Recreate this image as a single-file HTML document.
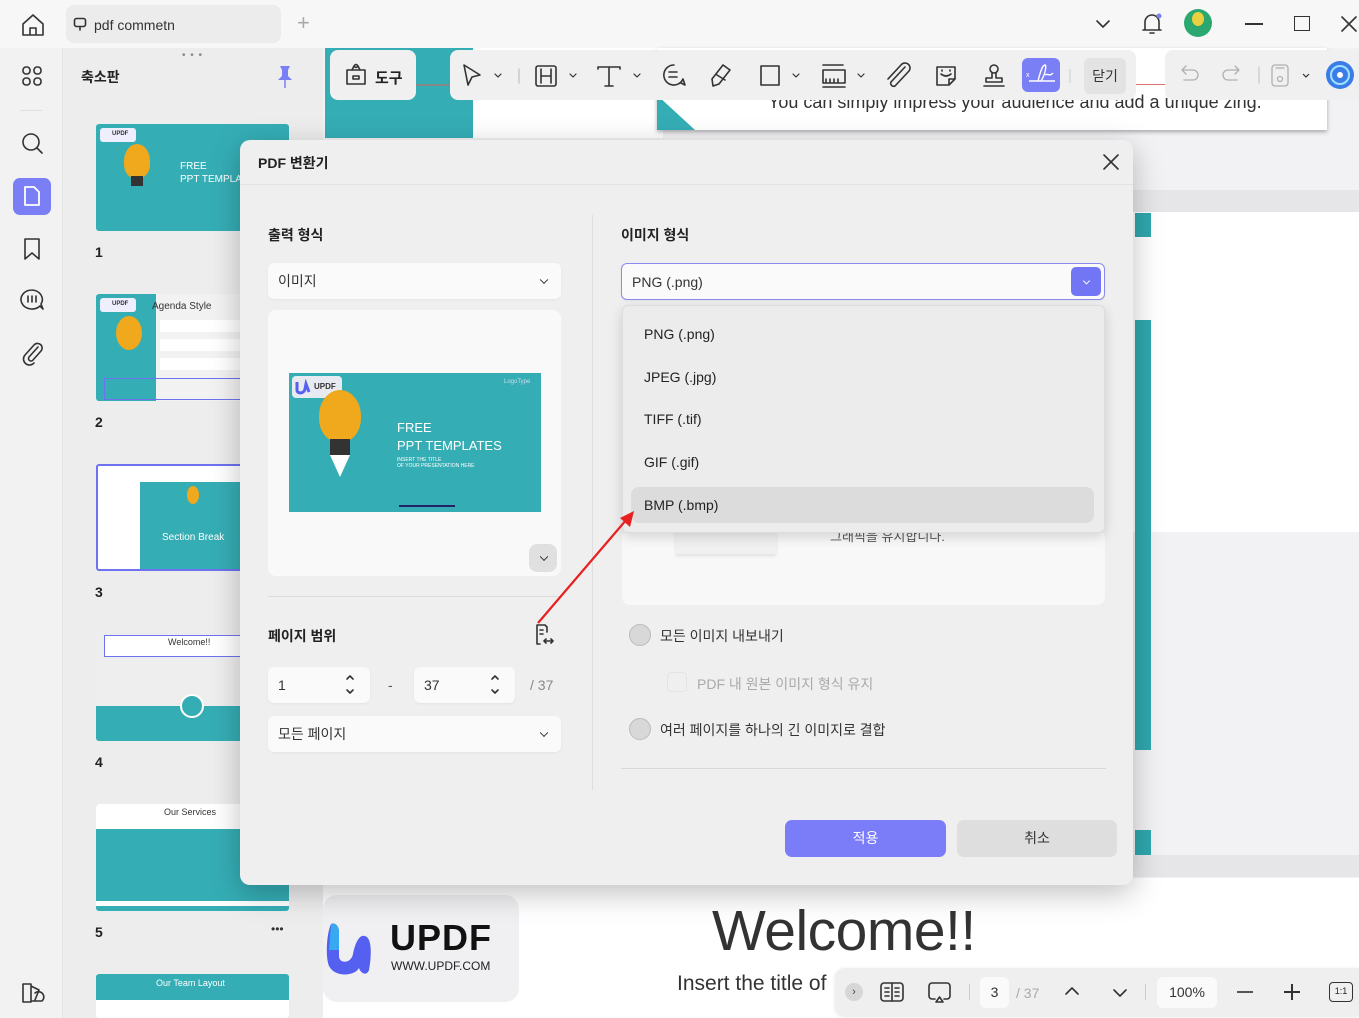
<!DOCTYPE html>
<html style="overflow:hidden;width:1359px;height:1018px"><head><meta charset="utf-8">
<style>
*{box-sizing:border-box;margin:0;padding:0}
body{width:1359px;height:1018px;overflow:hidden;position:relative;background:#f5f5f6;font-family:"Liberation Sans","Noto Sans CJK KR",sans-serif;color:#222}
.a{position:absolute}
.ic{stroke:#333;fill:none;stroke-width:1.6;stroke-linecap:round;stroke-linejoin:round}
.th{position:absolute;left:96px;width:193px;height:107px;background:#35adb5;border-radius:3px;overflow:hidden}
.num{position:absolute;left:95px;font-weight:bold;font-size:14px}
.logo{position:absolute;left:4px;top:4px;width:36px;height:14px;background:#eef;border-radius:3px;font-size:6px;font-weight:bold;color:#333;padding:3px 0 0 12px}
.sel{position:absolute;background:#fafafa;border-radius:6px;font-size:14px;color:#333;padding-left:10px;display:flex;align-items:center;box-shadow:0 1px 2px rgba(0,0,0,.05)}
.chev{position:absolute;right:14px;top:50%;width:6px;height:6px;border-right:1.5px solid #333;border-bottom:1.5px solid #333;transform:translateY(-70%) rotate(45deg)}
.opt{position:absolute;left:644px;font-size:14px;color:#222}
.radio{position:absolute;width:22px;height:22px;border-radius:50%;background:#d8d8d8;border:1px solid #bbb}
</style></head><body>

<!-- top bar -->
<div class="a" style="left:0;top:0;width:1359px;height:48px;background:#f7f7f7"></div>
<svg class="a" style="left:20px;top:12px" width="26" height="26" viewBox="0 0 26 26"><path class="ic" d="M3 12 L13 3 L23 12 V23 H3 Z M10 23 V16 H16 V23"/></svg>
<div class="a" style="left:66px;top:5px;width:215px;height:38px;background:#ececec;border-radius:8px;font-size:14px;color:#333;padding:12px 0 0 28px">pdf commetn</div>
<svg class="a" style="left:73px;top:17px" width="14" height="14" viewBox="0 0 14 14"><rect class="ic" x="1.5" y="1.5" width="11" height="8" rx="2" stroke-width="1.2"/><path class="ic" d="M7 10 V13" stroke-width="1.2"/></svg>
<div class="a" style="left:297px;top:10px;font-size:22px;color:#aaa;font-weight:300">+</div>
<svg class="a" style="left:1095px;top:17px" width="16" height="14"><path class="ic" d="M2 4 L8 10 L14 4" stroke-width="1.3"/></svg>
<svg class="a" style="left:1140px;top:11px" width="24" height="26"><path class="ic" d="M5 19 V11 A7 7 0 0 1 19 11 V19 H5 M3 19 H21 M10 22 H14"/><circle cx="19" cy="5" r="2.5" fill="#7b7ff0"/></svg>
<div class="a" style="left:1184px;top:9px;width:28px;height:28px;border-radius:50%;background:#2aa870"></div>
<div class="a" style="left:1192px;top:12px;width:12px;height:14px;border-radius:50%;background:#e8d040"></div>
<div class="a" style="left:1245px;top:23px;width:18px;height:1.5px;background:#333"></div>
<div class="a" style="left:1294px;top:16px;width:16px;height:15px;border:1.5px solid #333"></div>
<svg class="a" style="left:1341px;top:16px" width="18" height="16"><path class="ic" d="M1 1 L15 15 M15 1 L1 15" stroke-width="1.3"/></svg>

<!-- left rail -->
<div class="a" style="left:0;top:48px;width:63px;height:970px;background:#f2f2f3;border-right:1px solid #e6e6e6"></div>
<svg class="a" style="left:20px;top:64px" width="24" height="24"><g class="ic" stroke-width="1.4"><rect x="3" y="3" width="7" height="7" rx="3"/><rect x="14" y="3" width="7" height="7" rx="3"/><rect x="3" y="14" width="7" height="7" rx="3"/><rect x="14" y="14" width="7" height="7" rx="3"/></g></svg>
<div class="a" style="left:20px;top:110px;width:22px;height:1px;background:#e0e0e0"></div>
<svg class="a" style="left:20px;top:131px" width="26" height="26"><circle class="ic" cx="11" cy="11" r="8"/><path class="ic" d="M17 17 L22 22"/></svg>
<div class="a" style="left:13px;top:178px;width:38px;height:37px;background:#7b7ff5;border-radius:7px"></div>
<svg class="a" style="left:20px;top:184px" width="24" height="24"><path d="M5 3 H14 L19 8 V21 H5 Z" fill="none" stroke="#fff" stroke-width="1.8" stroke-linejoin="round"/></svg>
<svg class="a" style="left:21px;top:237px" width="24" height="24"><path class="ic" d="M4 2 H18 V22 L11 16 L4 22 Z"/></svg>
<svg class="a" style="left:18px;top:287px" width="28" height="26"><path class="ic" d="M14 3 A11 9.5 0 1 0 22 19 L25 22 L23 17 A11 9.5 0 0 0 14 3 M10 9 V15 M14 9 V15 M18 9 V15"/></svg>
<svg class="a" style="left:20px;top:340px" width="26" height="26"><path class="ic" d="M18 7 L9 17 A2.5 2.5 0 0 0 13 20 L21 11 A4.5 4.5 0 0 0 14 5 L5 15 A6 6 0 0 0 14 23"/></svg>
<svg class="a" style="left:20px;top:980px" width="26" height="26"><path class="ic" d="M3 4 H11 V22 H3 Z M11 6 L19 10 L15 20 M12 21 H22 A3 3 0 0 0 15 13"/></svg>

<!-- thumbnail panel -->
<div class="a" style="left:63px;top:48px;width:260px;height:970px;background:#ededee;overflow:hidden">
<div class="a" style="left:119px;top:2px;font-size:10px;color:#888;letter-spacing:1px">• • •</div>
<div class="a" style="left:18px;top:19px;font-size:14px;font-weight:bold">축소판</div>
<svg class="a" style="left:213px;top:16px" width="18" height="26"><path d="M4 2 H14 L12 6 V12 L16 16 H2 L6 12 V6 Z" fill="#7b7ff5"/><path d="M9 16 V24" stroke="#7b7ff5" stroke-width="1.5"/></svg>
</div>
<div class="a" style="left:0;top:0;width:323px;height:1018px;overflow:hidden">
<div class="th" style="top:124px"><div class="logo">UPDF</div><div class="a" style="left:28px;top:20px;width:26px;height:34px;background:#f0a81c;border-radius:50% 50% 40% 40%"></div><div class="a" style="left:35px;top:52px;width:12px;height:10px;background:#333"></div><div class="a" style="left:84px;top:36px;color:#fff;font-size:10px;line-height:13px">FREE<br>PPT TEMPLATES</div></div>
<div class="num" style="top:244px">1</div>
<div class="th" style="top:294px;background:#f2f2f2"><div class="a" style="left:0;top:0;width:60px;height:107px;background:#35adb5"></div><div class="logo">UPDF</div><div class="a" style="left:20px;top:22px;width:26px;height:34px;background:#f0a81c;border-radius:50%"></div><div class="a" style="left:56px;top:7px;font-size:10px;color:#333">Agenda Style</div><div class="a" style="left:64px;top:26px;width:130px;height:12px;background:#fff"></div><div class="a" style="left:64px;top:45px;width:130px;height:12px;background:#fff"></div><div class="a" style="left:64px;top:64px;width:130px;height:12px;background:#fff"></div><div class="a" style="left:8px;top:84px;width:190px;height:22px;border:1.5px solid #6e72f0"></div></div>
<div class="num" style="top:414px">2</div>
<div class="th" style="top:464px;background:#fff;border:2px solid #6e72f0"><div class="a" style="left:42px;top:16px;width:160px;height:88px;background:#35adb5"></div><div class="a" style="left:64px;top:66px;color:#fff;font-size:10px">Section Break</div><div class="a" style="left:89px;top:20px;width:12px;height:18px;background:#f0a81c;border-radius:50%"></div></div>
<div class="num" style="top:584px">3</div>
<div class="th" style="top:634px;background:#eee"><div class="a" style="left:8px;top:1px;width:190px;height:22px;border:1.5px solid #6e72f0;background:#fff"></div><div class="a" style="left:72px;top:3px;font-size:9px;color:#333">Welcome!!</div><div class="a" style="left:0;top:72px;width:193px;height:35px;background:#35adb5"></div><div class="a" style="left:84px;top:60px;width:24px;height:24px;border-radius:50%;background:#35adb5;border:2px solid #fff"></div></div>
<div class="num" style="top:754px">4</div>
<div class="th" style="top:804px"><div class="a" style="left:0;top:0;width:193px;height:25px;background:#fff"></div><div class="a" style="left:68px;top:3px;font-size:9px;color:#333">Our Services</div><div class="a" style="left:0;top:97px;width:193px;height:5px;background:#fff"></div></div>
<div class="num" style="top:924px">5</div>
<div class="a" style="left:271px;top:922px;font-size:12px;color:#333">•••</div>
<div class="th" style="top:974px;height:44px;background:#fff"><div class="a" style="left:0;top:0;width:193px;height:26px;background:#35adb5"></div><div class="a" style="left:60px;top:4px;font-size:9px;color:#fff">Our Team Layout</div></div>
</div>

<!-- main document background -->
<div class="a" style="left:323px;top:48px;width:1036px;height:970px;background:#f2f1f3"></div>
<div class="a" style="left:325px;top:48px;width:148px;height:90px;background:#35adb5"></div>
<div class="a" style="left:473px;top:48px;width:190px;height:90px;background:#fff"></div>
<div class="a" style="left:657px;top:48px;width:670px;height:82px;background:#fff;box-shadow:0 2px 4px rgba(0,0,0,.3)"></div>
<div class="a" style="left:657px;top:95px;width:0;height:0;border-left:38px solid #35adb5;border-top:35px solid transparent"></div>
<div class="a" style="left:768px;top:92px;font-size:18px;color:#333">You can simply impress your audience and add a unique zing.</div>
<div class="a" style="left:1130px;top:190px;width:229px;height:22px;background:#e6e6e8"></div>
<div class="a" style="left:1130px;top:212px;width:229px;height:320px;background:#fff"></div>
<div class="a" style="left:1135px;top:213px;width:16px;height:24px;background:#2fa7ae"></div>
<div class="a" style="left:1135px;top:320px;width:16px;height:430px;background:#2fa7ae"></div>
<div class="a" style="left:1135px;top:830px;width:16px;height:25px;background:#2fa7ae"></div>
<div class="a" style="left:1130px;top:855px;width:229px;height:22px;background:#e6e6e8"></div>
<div class="a" style="left:323px;top:878px;width:1036px;height:140px;background:#fff"></div>
<div class="a" style="left:323px;top:895px;width:196px;height:107px;background:#f0f0f2;border-radius:14px"></div>
<svg class="a" style="left:325px;top:920px" width="52" height="58"><path d="M6 4 C10 2 14 6 14 12 V36 C14 44 26 44 28 34 C30 24 34 14 40 16 C48 18 46 40 44 50 C42 56 36 54 34 48 C30 56 10 58 4 46 C0 36 2 12 6 4 Z" fill="#5560f0"/><path d="M6 4 C10 2 14 6 14 12 V30 L4 30 Z" fill="#38a8f0"/></svg>
<div class="a" style="left:390px;top:917px;font-size:36px;font-weight:bold;color:#111;letter-spacing:1px">UPDF</div>
<div class="a" style="left:391px;top:959px;font-size:12px;color:#222">WWW.UPDF.COM</div>
<div class="a" style="left:712px;top:898px;font-size:57px;color:#333;letter-spacing:-0.5px">Welcome!!</div>
<div class="a" style="left:677px;top:972px;font-size:21px;color:#333">Insert the title of</div>

<!-- top toolbars -->
<div class="a" style="left:330px;top:50px;width:86px;height:50px;background:#f0f0f0;border-radius:8px"></div>
<svg class="a" style="left:343px;top:62px" width="26" height="26"><path class="ic" d="M4 8 H22 V22 H4 Z M9 8 L11 4 M17 8 L15 4 M10 14 H16 V17 H10 Z" stroke-width="1.4"/><circle class="ic" cx="13" cy="4" r="1.5" stroke-width="1.2"/></svg>
<div class="a" style="left:375px;top:67px;font-size:15px;font-weight:bold;color:#222">도구</div>
<div class="a" style="left:416px;top:84px;width:34px;height:2px;background:#888"></div>
<div class="a" style="left:450px;top:50px;width:622px;height:50px;background:#f0f0f0;border-radius:8px 0 0 8px"></div>
<div class="a" style="left:1072px;top:50px;width:64px;height:50px;background:#f0f0f0;border-radius:0 8px 8px 0"></div>
<svg class="a" style="left:455px;top:55px" width="620" height="40" viewBox="0 0 620 40">
<g class="ic" stroke-width="1.4">
<path d="M9 10 L25 20 L17 22 L13 30 Z"/><path d="M40 19 L43 22 L46 19" stroke-width="1.2"/>
<line x1="64" y1="14" x2="64" y2="28" style="stroke:#ccc"/>
<rect x="81" y="11" width="20" height="20" rx="2"/><path d="M86 14 V28 M96 14 V28 M86 21 H96"/><path d="M115 19 L118 22 L121 19" stroke-width="1.2"/>
<path d="M143 12 H165 M154 12 V31 M143 12 V14 M165 12 V14 M150 31 H158"/><path d="M179 19 L182 22 L185 19" stroke-width="1.2"/>
<path d="M219 10 A10 10 0 1 0 228 24 L230 30 L226 28"/><path d="M214 17 H222 M214 22 H222"/>
<path d="M258 31 L257 24 L268 10 L275 15 L264 29 Z M262 20 L270 25"/>
<rect x="306" y="11" width="18" height="19"/><path d="M338 19 L341 22 L344 19" stroke-width="1.2"/>
<path d="M368 10 H388 M368 15 H390 V28 H368 V15 M371 28 V24 M375 28 V24 M379 28 V24 M383 28 V24 M368 32 H390"/><path d="M403 19 L406 22 L409 19" stroke-width="1.2"/>
<path d="M450 12 L436 27 A3 3 0 0 0 440 31 L454 16 A5 5 0 0 0 446 10 L433 24"/>
<path d="M482 12 H500 V24 L494 30 H482 Z M494 30 V24 H500 M486 19 Q491 23 496 19 M487 15 V16 M495 15 V16"/>
<circle cx="539" cy="14" r="4"/><path d="M537 18 V23 H531 V27 H547 V23 H541 V18 M529 31 H549"/>
</g>
<rect x="567" y="3" width="38" height="34" rx="6" fill="#7b7ff5"/>
<path d="M574 26 H600 M583 26 C586 14 588 10 590 10 C592 10 590 20 586 26 M590 20 C592 18 595 22 598 18" stroke="#fff" stroke-width="1.4" fill="none"/><text x="571" y="22" font-size="7" fill="#fff" font-family="Liberation Sans">x</text>
<line x1="615" y1="14" x2="615" y2="28" stroke="#ccc"/>
</svg>
<div class="a" style="left:1084px;top:58px;width:42px;height:36px;background:#e3e3e3;border-radius:6px;font-size:14px;color:#333;text-align:center;line-height:36px">닫기</div>
<div class="a" style="left:1136px;top:84px;width:30px;height:1px;background:#e07070"></div>
<div class="a" style="left:1165px;top:50px;width:194px;height:50px;background:#f0f0f0;border-radius:8px 0 0 8px"></div>
<svg class="a" style="left:1170px;top:55px" width="189" height="40"><g style="stroke:#b0b0b0;fill:none;stroke-width:1.3;stroke-linecap:round;stroke-linejoin:round"><path d="M13 15 H23 A5 5 0 0 1 23 25 H14 M16 11 L12 15 L16 19"/><path d="M68 15 H58 A5 5 0 0 0 58 25 H67 M65 11 L69 15 L65 19"/><line x1="89" y1="12" x2="89" y2="28" style="stroke:#ccc"/><rect x="102" y="10" width="16" height="21" rx="3"/><circle cx="110" cy="24" r="2.5"/><path d="M106 13 H114"/></g><path d="M133 19 L136 22 L139 19" stroke="#333" fill="none" stroke-width="1.2"/><circle cx="170" cy="20" r="14" fill="#3a7de8"/><circle cx="170" cy="20" r="9" fill="none" stroke="#9fe3ff" stroke-width="2"/><circle cx="170" cy="20" r="3" fill="#fff"/></svg>

<!-- bottom toolbar -->
<div class="a" style="left:835px;top:968px;width:524px;height:48px;background:#efeff0;border-radius:10px 0 0 10px;box-shadow:0 1px 4px rgba(0,0,0,.1)"></div>
<div class="a" style="left:845px;top:983px;width:18px;height:18px;border-radius:50%;background:#d6d6d6;font-size:11px;text-align:center;line-height:18px;color:#444">›</div>
<svg class="a" style="left:879px;top:980px" width="28" height="24"><g class="ic" stroke-width="1.3"><rect x="2" y="3" width="22" height="18" rx="3"/><path d="M13 3 V21 M6 8 H10 M6 12 H10 M6 16 H10 M16 8 H20 M16 12 H20 M16 16 H20"/></g></svg>
<svg class="a" style="left:926px;top:980px" width="28" height="26"><g class="ic" stroke-width="1.3"><path d="M9 19 H6 A3 3 0 0 1 3 16 V6 A3 3 0 0 1 6 3 H21 A3 3 0 0 1 24 6 V16 A3 3 0 0 1 21 19 H18"/><path d="M13.5 17 L17 22 H10 Z"/></g></svg>
<div class="a" style="left:969px;top:984px;width:1px;height:16px;background:#ccc"></div>
<div class="a" style="left:980px;top:977px;width:29px;height:31px;background:#fafafa;border-radius:6px;font-size:14px;text-align:center;line-height:31px;color:#333">3</div>
<div class="a" style="left:1016px;top:985px;font-size:14px;color:#aaa">/ 37</div>
<svg class="a" style="left:1063px;top:984px" width="18" height="14"><path class="ic" d="M3 10 L9 4 L15 10" stroke-width="1.3"/></svg>
<svg class="a" style="left:1111px;top:986px" width="18" height="14"><path class="ic" d="M3 4 L9 10 L15 4" stroke-width="1.3"/></svg>
<div class="a" style="left:1145px;top:984px;width:1px;height:16px;background:#ccc"></div>
<div class="a" style="left:1157px;top:977px;width:60px;height:31px;background:#fafafa;border-radius:6px;font-size:14px;text-align:center;line-height:31px;color:#333">100%</div>
<div class="a" style="left:1237px;top:991px;width:16px;height:1.5px;background:#555"></div>
<div class="a" style="left:1284px;top:991px;width:16px;height:1.5px;background:#333"></div>
<div class="a" style="left:1291px;top:984px;width:1.5px;height:16px;background:#333"></div>
<div class="a" style="left:1329px;top:982px;width:24px;height:20px;border:1.4px solid #333;border-radius:4px;font-size:9px;text-align:center;line-height:17px">1:1</div>

<!-- dialog -->
<div class="a" style="left:240px;top:140px;width:893px;height:745px;background:#efefef;border-radius:10px;box-shadow:0 8px 30px rgba(0,0,0,.25)"></div>
<div class="a" style="left:240px;top:184px;width:893px;height:1px;background:#e2e2e2"></div>
<div class="a" style="left:258px;top:153px;font-size:14px;font-weight:bold">PDF 변환기</div>
<svg class="a" style="left:1102px;top:153px" width="18" height="18"><path class="ic" d="M2 2 L16 16 M16 2 L2 16" stroke-width="1.4"/></svg>

<div class="a" style="left:268px;top:225px;font-size:14px;font-weight:bold">출력 형식</div>
<div class="sel" style="left:268px;top:263px;width:293px;height:36px">이미지<span class="chev"></span></div>
<div class="a" style="left:268px;top:310px;width:293px;height:266px;background:#f9f9f9;border-radius:8px"></div>
<div class="a" style="left:289px;top:373px;width:252px;height:139px;background:#35adb5">
 <div class="a" style="left:3px;top:3px;width:50px;height:22px;background:#e8eaf2;border-radius:4px;font-size:8px;font-weight:bold;padding:6px 0 0 22px;color:#333">UPDF</div>
 <svg class="a" style="left:6px;top:6px" width="16" height="16"><path d="M2 3 V11 C2 15 9 15 10 10 L11 5 L14 13" fill="none" stroke="#5560f0" stroke-width="3"/></svg>
 <div class="a" style="left:215px;top:6px;font-size:6px;color:#cde">LogoType</div>
 <div class="a" style="left:30px;top:17px;width:42px;height:52px;background:#f0a81c;border-radius:50% 50% 45% 45%"></div>
 <div class="a" style="left:41px;top:66px;width:20px;height:16px;background:#333"></div>
 <div class="a" style="left:41px;top:82px;width:0;height:0;border-left:10px solid transparent;border-right:10px solid transparent;border-top:22px solid #fff"></div>
 <div class="a" style="left:108px;top:46px;color:#fff;font-size:13px;line-height:18px">FREE<br>PPT TEMPLATES</div>
 <div class="a" style="left:108px;top:84px;color:#fff;font-size:5px;line-height:6px">INSERT THE TITLE<br>OF YOUR PRESENTATION HERE</div>
 <div class="a" style="left:110px;top:132px;width:56px;height:2px;background:#226"></div>
</div>
<div class="a" style="left:529px;top:544px;width:28px;height:28px;background:#e0e0e0;border-radius:8px"><span class="chev" style="right:10px"></span></div>
<div class="a" style="left:268px;top:596px;width:293px;height:1px;background:#dcdcdc"></div>
<div class="a" style="left:268px;top:626px;font-size:14px;font-weight:bold">페이지 범위</div>
<svg class="a" style="left:532px;top:622px" width="24" height="26"><g class="ic" stroke-width="1.3"><path d="M8 22 H5 V3 H13 L15 5 V10"/><path d="M8 8 H11 M8 12 H11 M12 19 H21 M14 17 L12 19 L14 21 M19 17 L21 19 L19 21"/></g></svg>
<div class="sel" style="left:268px;top:667px;width:102px;height:36px">1</div>
<svg class="a" style="left:344px;top:673px" width="12" height="24"><path class="ic" d="M3 6 L6 3 L9 6 M3 17 L6 20 L9 17" stroke-width="1.1"/></svg>
<div class="a" style="left:388px;top:677px;font-size:14px;color:#555">-</div>
<div class="sel" style="left:414px;top:667px;width:101px;height:36px">37</div>
<svg class="a" style="left:489px;top:673px" width="12" height="24"><path class="ic" d="M3 6 L6 3 L9 6 M3 17 L6 20 L9 17" stroke-width="1.1"/></svg>
<div class="a" style="left:530px;top:677px;font-size:14px;color:#888">/ 37</div>
<div class="sel" style="left:268px;top:716px;width:293px;height:36px">모든 페이지<span class="chev"></span></div>

<div class="a" style="left:592px;top:215px;width:1px;height:575px;background:#dedede"></div>

<div class="a" style="left:621px;top:225px;font-size:14px;font-weight:bold">이미지 형식</div>
<div class="a" style="left:622px;top:530px;width:483px;height:75px;background:#f8f8f8;border-radius:8px"></div>
<div class="a" style="left:676px;top:530px;width:100px;height:24px;background:#f0f0f0;box-shadow:0 2px 4px rgba(0,0,0,.1)"></div>
<div class="a" style="left:830px;top:526px;font-size:13px;color:#555">그래픽을 유지합니다.</div>
<div class="sel" style="left:621px;top:263px;width:484px;height:37px;border:1.5px solid #8a8cf0;background:#fafafa">PNG (.png)</div>
<div class="a" style="left:1071px;top:267px;width:30px;height:29px;background:#7276f5;border-radius:5px"><span class="chev" style="right:12px;border-color:#fff;width:5px;height:5px"></span></div>
<div class="a" style="left:622px;top:305px;width:483px;height:228px;background:#ececec;border-radius:6px;box-shadow:0 4px 12px rgba(0,0,0,.15);border:1px solid #ddd"></div>
<div class="a" style="left:631px;top:487px;width:463px;height:36px;background:#dcdcdc;border-radius:8px"></div>
<div class="opt" style="top:326px">PNG (.png)</div>
<div class="opt" style="top:369px">JPEG (.jpg)</div>
<div class="opt" style="top:411px">TIFF (.tif)</div>
<div class="opt" style="top:454px">GIF (.gif)</div>
<div class="opt" style="top:497px">BMP (.bmp)</div>

<div class="radio" style="left:629px;top:624px"></div>
<div class="a" style="left:660px;top:626px;font-size:14px;color:#333">모든 이미지 내보내기</div>
<div class="a" style="left:667px;top:672px;width:20px;height:20px;border:1px solid #e4e4e4;border-radius:4px"></div>
<div class="a" style="left:697px;top:674px;font-size:14px;color:#aaa">PDF 내 원본 이미지 형식 유지</div>
<div class="radio" style="left:629px;top:718px"></div>
<div class="a" style="left:660px;top:720px;font-size:14px;color:#333">여러 페이지를 하나의 긴 이미지로 결합</div>
<div class="a" style="left:621px;top:768px;width:485px;height:1px;background:#d8d8d8"></div>

<div class="a" style="left:785px;top:820px;width:161px;height:37px;background:#7a7cf8;border-radius:7px;color:#fff;font-size:14px;text-align:center;line-height:37px">적용</div>
<div class="a" style="left:957px;top:820px;width:160px;height:37px;background:#dedede;border-radius:7px;color:#333;font-size:14px;text-align:center;line-height:37px">취소</div>

<!-- red arrow -->
<svg class="a" style="left:530px;top:505px" width="110" height="125"><line x1="8" y1="118" x2="97" y2="14" stroke="#e82020" stroke-width="2.2"/><path d="M104 6 L90 13 L100 22 Z" fill="#e82020"/></svg>

</body></html>
